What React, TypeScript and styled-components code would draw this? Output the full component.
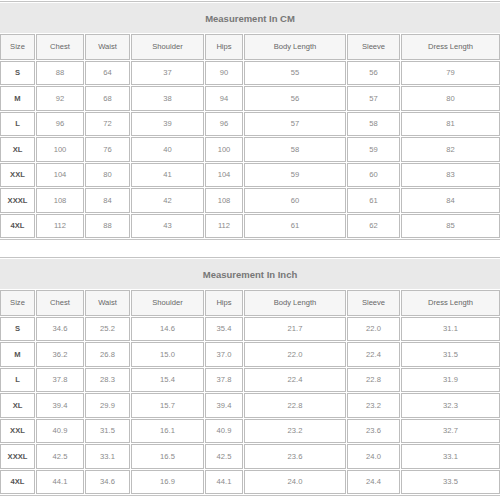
import React from "react";
import styled, { createGlobalStyle } from "styled-components";

const GlobalStyle = createGlobalStyle`
  html, body {
    margin: 0;
    padding: 0;
    background: #ffffff;
  }
  body {
    font-family: "Liberation Sans", Arial, sans-serif;
  }
`;

const columns = [
  { label: "Size", width: 35 },
  { label: "Chest", width: 48 },
  { label: "Waist", width: 45 },
  { label: "Shoulder", width: 73 },
  { label: "Hips", width: 38 },
  { label: "Body Length", width: 102 },
  { label: "Sleeve", width: 53 },
  { label: "Dress Length", width: 99 },
];

const sizes = ["S", "M", "L", "XL", "XXL", "XXXL", "4XL"];

const cmRows = [
  [88, 64, 37, 90, 55, 56, 79],
  [92, 68, 38, 94, 56, 57, 80],
  [96, 72, 39, 96, 57, 58, 81],
  [100, 76, 40, 100, 58, 59, 82],
  [104, 80, 41, 104, 59, 60, 83],
  [108, 84, 42, 108, 60, 61, 84],
  [112, 88, 43, 112, 61, 62, 85],
].map((r) => r.map(String));

const inchRows = [
  ["34.6", "25.2", "14.6", "35.4", "21.7", "22.0", "31.1"],
  ["36.2", "26.8", "15.0", "37.0", "22.0", "22.4", "31.5"],
  ["37.8", "28.3", "15.4", "37.8", "22.4", "22.8", "31.9"],
  ["39.4", "29.9", "15.7", "39.4", "22.8", "23.2", "32.3"],
  ["40.9", "31.5", "16.1", "40.9", "23.2", "23.6", "32.7"],
  ["42.5", "33.1", "16.5", "42.5", "23.6", "24.0", "33.1"],
  ["44.1", "34.6", "16.9", "44.1", "24.0", "24.4", "33.5"],
];

function SizeTable({ title, rows }: { title: string; rows: string[][] }) {
  return (
    <Table>
      <colgroup>
        {columns.map((c) => (
          <col key={c.label} style={{ width: c.width }} />
        ))}
      </colgroup>
      <thead>
        <tr>
          <TitleCell colSpan={columns.length}>{title}</TitleCell>
        </tr>
        <tr>
          {columns.map((c) => (
            <HeadCell key={c.label}>{c.label}</HeadCell>
          ))}
        </tr>
      </thead>
      <tbody>
        {rows.map((row, i) => (
          <tr key={sizes[i]}>
            <SizeCell>{sizes[i]}</SizeCell>
            {row.map((v, j) => (
              <ValueCell key={j}>{v}</ValueCell>
            ))}
          </tr>
        ))}
      </tbody>
    </Table>
  );
}

export default function App() {
  return (
    <>
      <GlobalStyle />
      <Page>
        <SizeTable title="Measurement In CM" rows={cmRows} />
        <SizeTable title="Measurement In Inch" rows={inchRows} />
      </Page>
    </>
  );
}

const Page = styled.div`
  width: 500px;
  padding-top: 1px;
  display: flex;
  flex-direction: column;
  gap: 17px;
  overflow: hidden;
`;

const Table = styled.table`
  width: 502px;
  margin-left: -1px;
  table-layout: fixed;
  border-collapse: separate;
  border-spacing: 1px;
  border-top: 1px solid #c4c4c4;
  border-bottom: 1px solid #c4c4c4;
`;

const Cell = styled.td`
  box-sizing: border-box;
  border: 1px solid #bdbdbd;
  text-align: center;
  vertical-align: middle;
  padding: 0 2px;
  height: 24.5px;
  font-size: 7.6px;
  white-space: nowrap;
  overflow: hidden;
`;

const TitleCell = styled(Cell).attrs({ as: "th" })`
  height: 30px;
  background: #e9e9e9;
  border-color: #e9e9e9;
  color: #777777;
  font-size: 9.5px;
  font-weight: 700;
`;

const HeadCell = styled(Cell).attrs({ as: "th" })`
  height: 25.5px;
  background: #f6f6f6;
  color: #666666;
  font-weight: 400;
`;

const SizeCell = styled(Cell)`
  color: #555555;
  font-weight: 700;
`;

const ValueCell = styled(Cell)`
  color: #8a8a8a;
`;
